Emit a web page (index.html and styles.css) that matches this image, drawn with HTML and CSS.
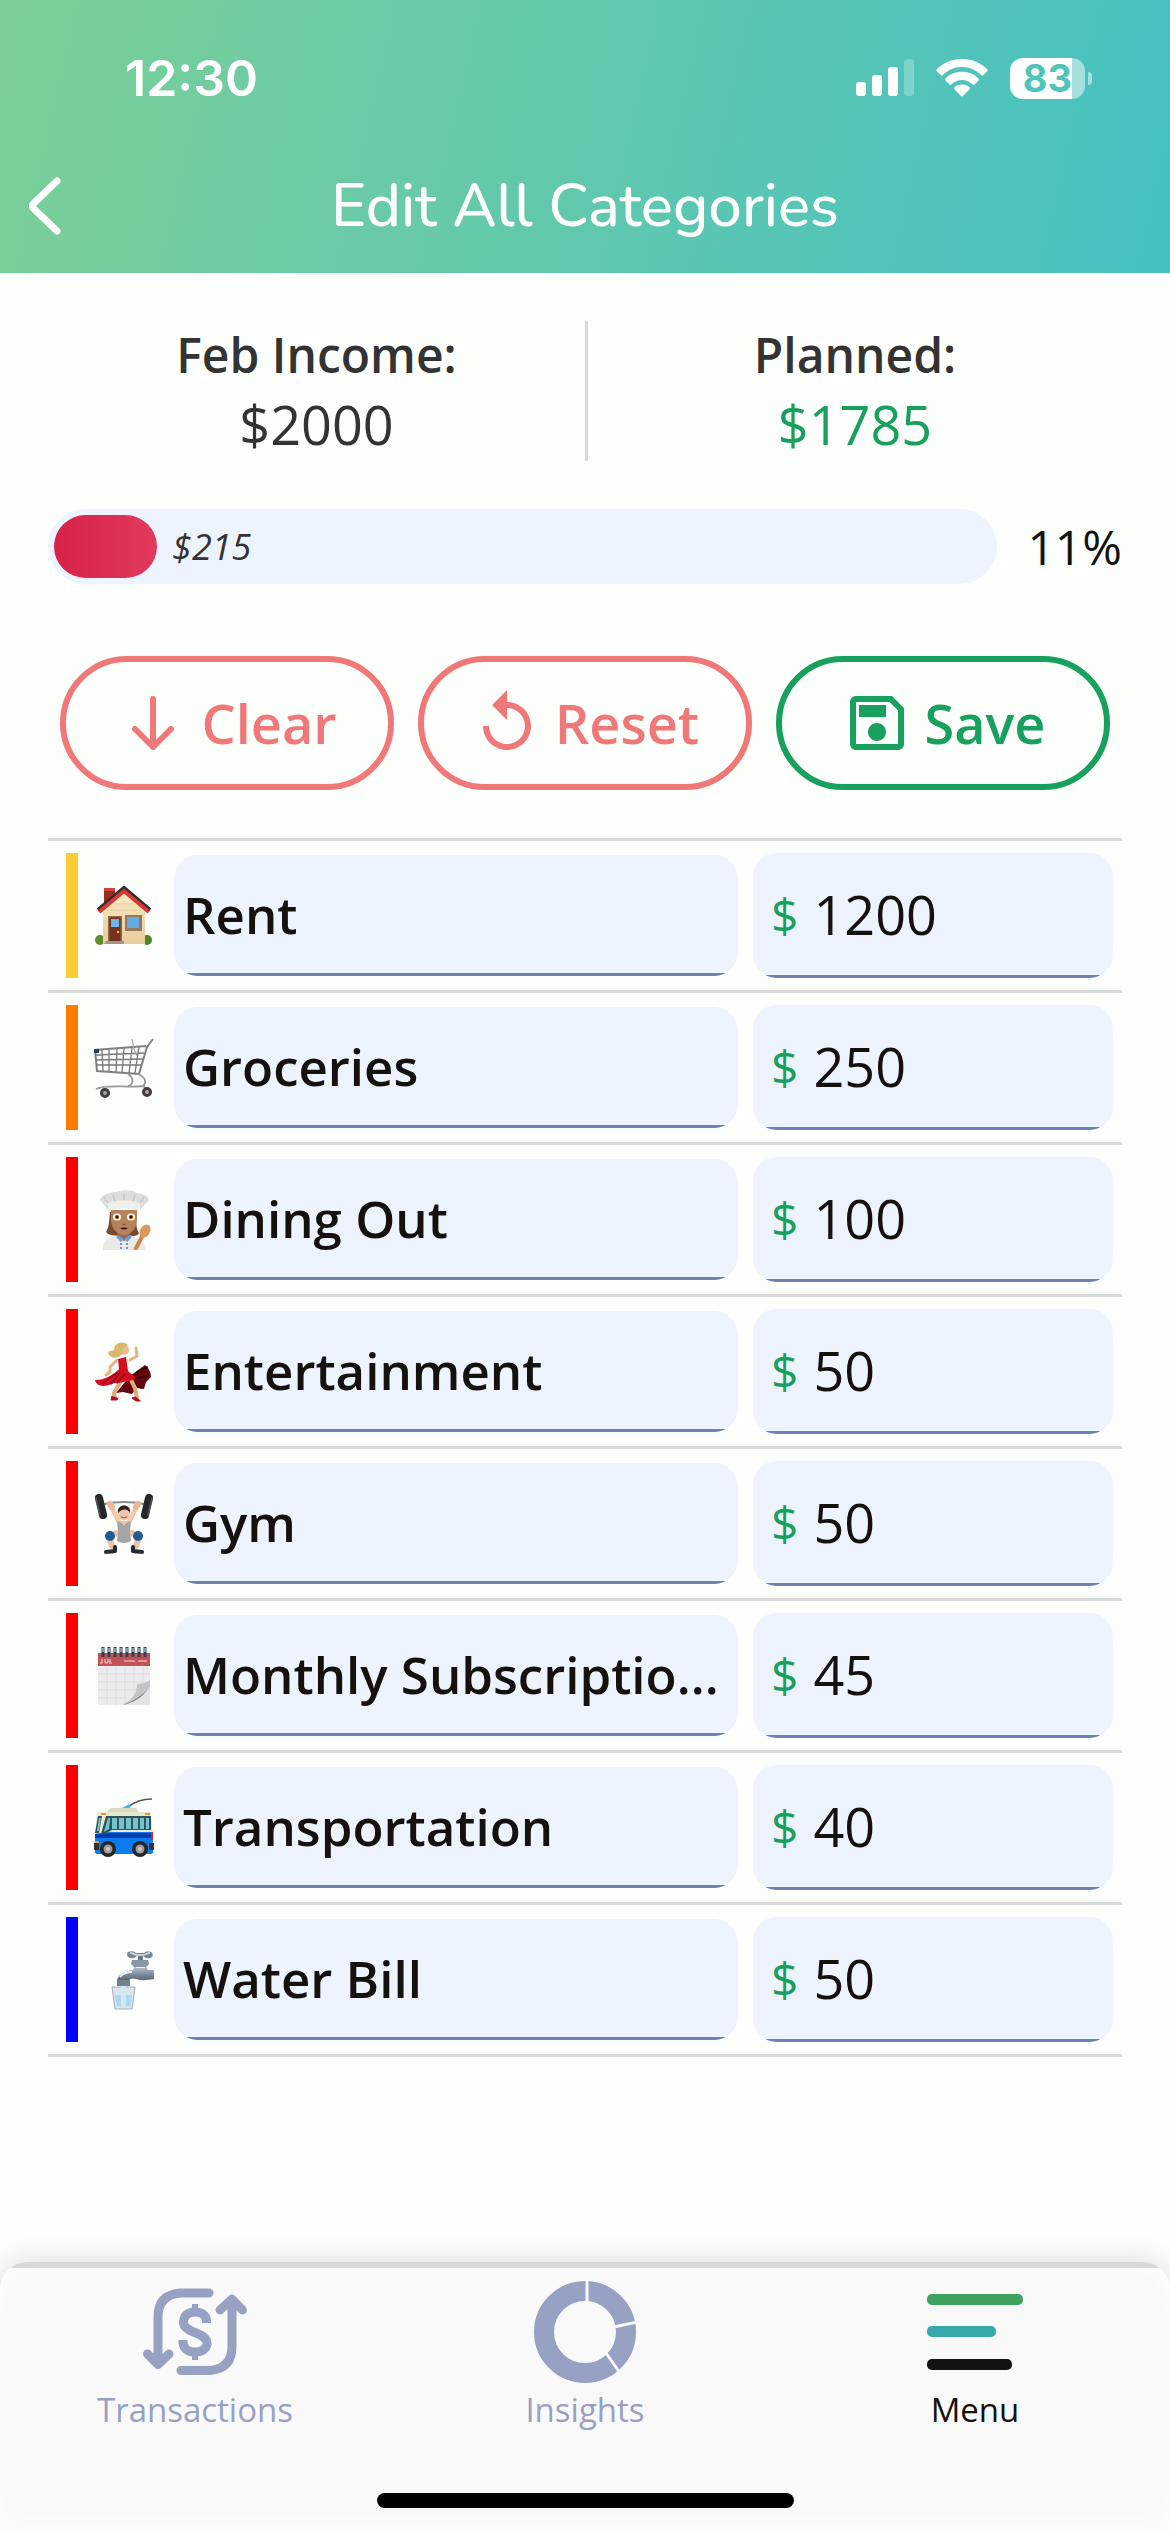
FILE: index.html
```html
<!DOCTYPE html>
<html lang="en">
<head>
<meta charset="utf-8">
<meta name="viewport" content="width=device-width, initial-scale=1">
<title>Edit All Categories</title>
<link rel="stylesheet" href="styles.css">
</head>
<body>
<header class="header">
  <div class="status">
    <span class="time">12:30</span>
    <div class="status-icons">
      <svg width="58" height="38" viewBox="0 0 58 38" fill="#fff" aria-hidden="true">
        <rect x="0" y="23" width="10" height="14" rx="3"/>
        <rect x="16" y="16" width="10" height="21" rx="3"/>
        <rect x="32" y="8" width="10" height="29" rx="3"/>
        <rect x="48" y="0" width="10" height="37" rx="3" opacity=".25"/>
      </svg>
      <svg width="52" height="38" viewBox="0 0 52 38" fill="#fff" aria-hidden="true">
        <path d="M26 0C16 0 7 4 .8 10.200q-.9 1 0 2l4 4q.9.900 1.900 0C12 11 18 8 26 8S40 11 45.300 16.200q1 .900 1.900 0l4-4q.900-1 0-2C45 4 36 0 26 0z"/>
        <path d="M26 12.800c-6.500 0-12.500 2.500-16.500 6.600q-1 1 0 2l4 4q.9.800 1.900 0c3-2.900 6.600-4.500 10.600-4.500s7.600 1.600 10.600 4.500q1 .8 1.900 0l4-4q1-1 0-2c-4-4.100-10-6.600-16.500-6.600z"/>
        <path d="M26 25.500c-2.900 0-5.600 1-7.600 2.800q-1 1 0 2l6.600 6.700q1 .8 2 0l6.600-6.700q1-1 0-2c-2-1.800-4.700-2.800-7.600-2.800z"/>
      </svg>
      <div class="battery"><span class="battery-level">83</span><span class="battery-tip"></span></div>
    </div>
  </div>
  <div class="titlebar">
    <button class="back" type="button" aria-label="Back">
      <svg width="36" height="60" viewBox="0 0 36 60" fill="none" stroke="#fff" stroke-width="7" stroke-linecap="round" stroke-linejoin="round"><path d="M30 5L6.500 27.500Q4.500 30 6.500 32.500L30 55"/></svg>
    </button>
    <h1 class="title">Edit All Categories</h1>
  </div>
</header>

<main class="main">
  <section class="summary">
    <div class="figure"><span class="figure-label">Feb Income:</span><span class="figure-value">$2000</span></div>
    <div class="figure"><span class="figure-label">Planned:</span><span class="figure-value planned">$1785</span></div>
  </section>

  <section class="budget">
    <div class="track">
      <div class="fill" style="width:11%"></div>
      <span class="left">$215</span>
    </div>
    <span class="percent">11%</span>
  </section>

  <div class="actions">
    <button class="action" type="button">
      <svg class="action-icon" viewBox="0 0 24 24" fill="none" stroke="currentColor" stroke-width="2" stroke-linecap="round" stroke-linejoin="round"><path d="M12 4v16M6 14l6 6 6-6"/></svg>
      Clear
    </button>
    <button class="action" type="button">
      <svg class="action-icon" viewBox="0 0 24 24" fill="currentColor"><path d="M12 5V1L7 6l5 5V7c3.310 0 6 2.690 6 6s-2.690 6-6 6-6-2.690-6-6H4c0 4.420 3.580 8 8 8s8-3.580 8-8-3.580-8-8-8z"/></svg>
      Reset
    </button>
    <button class="action save" type="button">
      <svg class="action-icon" viewBox="0 0 24 24" fill="currentColor"><path d="M17 3H5C3.890 3 3 3.900 3 5V19C3 20.100 3.890 21 5 21H19C20.100 21 21 20.100 21 19V7L17 3M19 19H5V5H16.170L19 7.830V19M12 12C10.340 12 9 13.340 9 15S10.340 18 12 18 15 16.660 15 15 13.660 12 12 12M6 6H15V10H6V6Z"/></svg>
      Save
    </button>
  </div>

  <ul class="list">
    <li class="row">
      <span class="stripe yellow"></span>
      <svg class="emoji" viewBox="0 0 60 60" aria-hidden="true">
        <defs><linearGradient id="wall" x2="0" y2="1"><stop stop-color="#fbe9c4"/><stop offset="1" stop-color="#e9cd9c"/></linearGradient></defs>
        <circle cx="6" cy="54" r="5" fill="#5b8f2c"/><circle cx="53" cy="54" r="5" fill="#4f8426"/>
        <path d="M10 2h11v14L10 24z" fill="#9c2b25"/><path d="M10 2h11v3H10z" fill="#c9473c"/>
        <path d="M9 24L30 6l21 18v34H9z" fill="url(#wall)"/>
        <path d="M9 36h42M9 42h42M9 48h42M14 24h32M20 18h20" stroke="#e5cfa5" stroke-width="1"/>
        <path d="M4 24L30 2l26 22" fill="none" stroke="#2d2b2c" stroke-width="4"/>
        <path d="M5 26L30 5l25 21" fill="none" stroke="#d93830" stroke-width="4"/>
        <path d="M14 30h14v26H14z" fill="#8d6547"/><path d="M15.500 31.500h11V56h-11z" fill="#75301e"/>
        <path d="M17 33h8v8h-8z" fill="#6fb7ea"/><circle cx="24" cy="46" r="1.200" fill="#f3c648"/>
        <path d="M31 29h17v16H31z" fill="#98765a"/><path d="M33 31h12v11H33z" fill="#65aae0"/>
        <path d="M12 55h18v3H10z" fill="#9d9589"/>
      </svg>
      <input class="name" type="text" aria-label="Category name" value="Rent">
      <label class="amount"><span class="currency">$</span><input class="amount-input" type="text" inputmode="decimal" aria-label="Amount" value="1200"></label>
    </li>
    <li class="row">
      <span class="stripe orange"></span>
      <svg class="emoji" viewBox="0 0 60 60" fill="none" stroke="#777" aria-hidden="true">
        <path d="M59 1l-6 8-8 27L3 33 1 12l51-4" stroke="#808080" stroke-width="2"/>
        <path d="M2 17l48-2M2 22l47-1M3 27l44 0M8 12l1 21M15 12v22M23 11l-1 23M30 10l-2 25M38 10l-3 25M45 9l-4 26" stroke-width="1.300"/>
        <path d="M38 1l2 10 3 7" stroke="#a5a5a5" stroke-width="1.200"/>
        <path d="M34 36c6 4 6 10 0 12M44 36c9 4 8 9 5 13M2 51c10-5 28-1 48-3l2 6M8 51l4 4" stroke="#999" stroke-width="1.800"/>
        <path d="M0 11h5v4H0z" fill="#214158" stroke="none"/>
        <circle cx="11" cy="55" r="3.500" fill="#aaa" stroke="#423c3d" stroke-width="3"/><circle cx="53" cy="54" r="3.500" fill="#aaa" stroke="#423c3d" stroke-width="3"/>
      </svg>
      <input class="name" type="text" aria-label="Category name" value="Groceries">
      <label class="amount"><span class="currency">$</span><input class="amount-input" type="text" inputmode="decimal" aria-label="Amount" value="250"></label>
    </li>
    <li class="row">
      <span class="stripe red"></span>
      <svg class="emoji" viewBox="0 0 60 60" aria-hidden="true">
        <path d="M16 22c-1 10-1 16-4 20 3 4 10 4 13 3h10c4 2 9 1 10-2-3-4-3-12-3-21z" fill="#7a4a30"/>
        <path d="M23 40h13v9l-6 4-7-4z" fill="#95694a"/>
        <path d="M9 60c0-9 4-12 13-14l8 5 8-5c9 2 13 6 13 14z" fill="#e9e9e7"/>
        <path d="M24 45l6 4-3 3-5-5zM36 45l-6 4 3 3 5-5z" fill="#6e9cd3"/>
        <path d="M26 54h2M32 54h2M26 58h2M32 58h2" stroke="#4b7bc0" stroke-width="1.500"/>
        <path d="M17 20h26v10c0 8-6 15-13 15s-13-7-13-15z" fill="#b5845f"/>
        <ellipse cx="23" cy="27" rx="4" ry="3.500" fill="#fff"/><ellipse cx="37" cy="27" rx="4" ry="3.500" fill="#fff"/>
        <circle cx="23" cy="27" r="2.300" fill="#a3701a"/><circle cx="37" cy="27" r="2.300" fill="#a3701a"/><circle cx="23" cy="27" r="1.200" fill="#1b1008"/><circle cx="37" cy="27" r="1.200" fill="#1b1008"/>
        <path d="M26 38q4-1 8 0-4 3-8 0z" fill="#35160f"/><path d="M28 34q2 1 4 0" stroke="#82563a" fill="none"/>
        <path d="M14 20L6 10C8 4 16 2 22 2c8-3 17-2 21 1 6 0 11 3 12 7l-9 10q-16-4-32 0z" fill="#dededc"/>
        <path d="M14 13q16-5 32 0v7q-16-4-32 0z" fill="#efefed"/><path d="M14 13L10 7M21 11l-2-6M30 10V4M39 11l2-6M46 13l4-6" stroke="#c4c4c4" stroke-width="1.300"/>
        <path d="M41 60l8-15" stroke="#c98749" stroke-width="4"/><ellipse cx="51" cy="41" rx="5" ry="7" fill="#d99a5d" transform="rotate(30 51 41)"/>
      </svg>
      <input class="name" type="text" aria-label="Category name" value="Dining Out">
      <label class="amount"><span class="currency">$</span><input class="amount-input" type="text" inputmode="decimal" aria-label="Amount" value="100"></label>
    </li>
    <li class="row">
      <span class="stripe red"></span>
      <svg class="emoji" viewBox="0 0 60 60" fill="none" stroke-linecap="round" stroke-linejoin="round" aria-hidden="true">
        <path d="M36 34l15-11c3 2 6 7 6 12l-5 5-2 7-7-1-5 6-9-2-7 1z" fill="#68060d"/>
        <path d="M43 30l10-5M42 36l12-2M38 40l9 6" stroke="#2b0306" stroke-width="1.500"/>
        <path d="M28 37l-8 14 1 5M36 36l5 10 2 10" stroke="#dfaa7f" stroke-width="4"/>
        <path d="M23 18l-7 7 0 5-4 3M36 18l7-4-1-8" stroke="#e5b288" stroke-width="3"/>
        <path d="M24 17l8-2 2 14 8 7c-6 4-11 3-17 5-6-1-9 3-16 3-5 0-8-4-8-6 10 0 18-5 24-11z" fill="#d50f22"/>
        <path d="M26 31l-9 11M31 32l-8 9M23 31L9 41" stroke="#8c0716" stroke-width="1.500"/>
        <circle cx="30" cy="8" r="5" fill="#e9bd91"/>
        <path d="M34 3c-6-5-14-2-14 5-1 1-5 0-6 3 2 5 8 6 12 3 4-2 2-6 4-8z" fill="#d8b86c"/>
        <path d="M18 54l-1 4 6 0 1-2M41 55l-3 1 4 3h4z" fill="#b40c1d" stroke="#b40c1d"/>
      </svg>
      <input class="name" type="text" aria-label="Category name" value="Entertainment">
      <label class="amount"><span class="currency">$</span><input class="amount-input" type="text" inputmode="decimal" aria-label="Amount" value="50"></label>
    </li>
    <li class="row">
      <span class="stripe red"></span>
      <svg class="emoji" viewBox="0 0 60 60" fill="none" stroke-linecap="round" stroke-linejoin="round" aria-hidden="true">
        <path d="M10 10q20-4 40 0" stroke="#8c8c8c" stroke-width="2"/>
        <path d="M22 39l-7 4 3 9M38 39l7 4-3 9" stroke="#edc3a5" stroke-width="6"/>
        <path d="M17 12l8 16M43 12l-8 16" stroke="#f0c9ac" stroke-width="5"/>
        <path d="M16 10l2 3M44 10l-2 3" stroke="#eab798" stroke-width="6"/>
        <path d="M23 27q7 4 14 0l-1 11 1 9q-7 4-14 0l1-9z" fill="#a3a5a7"/>
        <path d="M26 27l4 5 4-5" fill="#eec3a4"/>
        <ellipse cx="30" cy="19" rx="6" ry="7.500" fill="#efc6a9"/><path d="M24 19c-2-10 14-10 12 0-2-4-7-5-12 0z" fill="#2b2424"/>
        <path d="M27 23q3 2 6 0" stroke="#935a46"/>
        <circle cx="16" cy="42" r="5" fill="#245a94"/><circle cx="44" cy="42" r="5" fill="#245a94"/>
        <path d="M21 53v4l-9 1M39 53v4l9 1" stroke="#262a33" stroke-width="4"/><path d="M11 60h8M41 60h8" stroke="#3279c2" stroke-width="1"/>
        <path d="M5 4l4 17M55 4l-4 17" stroke="#252729" stroke-width="8"/><path d="M2 4l4 17M58 4l-4 17" stroke="#555" stroke-width="1.500"/>
      </svg>
      <input class="name" type="text" aria-label="Category name" value="Gym">
      <label class="amount"><span class="currency">$</span><input class="amount-input" type="text" inputmode="decimal" aria-label="Amount" value="50"></label>
    </li>
    <li class="row">
      <span class="stripe red"></span>
      <svg class="emoji" viewBox="0 0 60 60" aria-hidden="true">
        <path d="M4 18h52v23L36 59H4z" fill="#ececef"/><path d="M4 7h52v13H4z" fill="#c55058"/>
        <path d="M4 28h52M4 36h52M4 44h52M4 52h40M13 20v39M22 20v39M31 20v39M40 20v36M49 20v28" stroke="#dcdce0"/>
        <path d="M56 38c-3 2-6 3-9 3-2 7-7 13-17 18h26z" fill="#e4e4e4"/><path d="M56 37c-4 1-7 3-11 4-1 7-6 13-16 18 14-3 25-12 27-22z" fill="#77777a"/>
        <path d="M56 34c-4 3-9 4-13 4 1 6-4 16-14 21 12-4 24-13 27-19z" fill="#c4c4c7"/>
        <path d="M8 13v4h-2M11 13v3q1.500 2 3 0v-3M16 13v4h2M30 15h11M44 15h9" fill="none" stroke="#e8abb0" stroke-width="1.500"/>
        <path d="M9 1v10M15 1v10M21 1v10M27 1v10M33 1v10M39 1v10M45 1v10M51 1v10" stroke="#32414c" stroke-width="3"/><path d="M9 2v4M15 2v4M21 2v4M27 2v4M33 2v4M39 2v4M45 2v4M51 2v4" stroke="#9db8ce" stroke-width="1.500"/>
      </svg>
      <input class="name" type="text" aria-label="Category name" value="Monthly Subscriptio...">
      <label class="amount"><span class="currency">$</span><input class="amount-input" type="text" inputmode="decimal" aria-label="Amount" value="45"></label>
    </li>
    <li class="row">
      <span class="stripe red"></span>
      <svg class="emoji" viewBox="0 0 60 60" aria-hidden="true">
        <path d="M34 9C40 4 48 1 58 1" fill="none" stroke="#555" stroke-width="1.500"/><path d="M28 10l7-4 2 3-5 3z" fill="#46b9e8"/>
        <path d="M13 14l3-4h26l3 4z" fill="#dad9c4"/>
        <path d="M3 14h54l2 23H1z" fill="#e8e7cf"/><path d="M1 36L15 34h44v20q0 2-2 2H3q-2 0-2-2z" fill="#087cf0"/><path d="M1 36l14-1h44v5H1z" fill="#073daf"/>
        <path d="M4 18h4L5 35H1zM12 18h45v14H18l-7 4H7z" fill="#31535b"/>
        <path d="M5 20h2L5 33H3zM14 20l-4 14 5-3 1-11zM18 20h5v11h-5zM25 20h5v11h-5zM32 20h5v11h-5zM39 20h5v11h-5zM46 20h4v11h-4zM52 20h3v11h-3z" fill="#73c4cc"/>
        <path d="M7 15h5v2H7zM51 15h5v2h-5zM1 43h4v3H1z" fill="#f79320"/><path d="M0 45h5v7H0zM55 45h5v7h-5z" fill="#333"/><path d="M57 34h2v8h-2z" fill="#e11d2f"/>
        <circle cx="14" cy="51" r="8" fill="#252525"/><circle cx="46" cy="51" r="8" fill="#252525"/><circle cx="14" cy="51" r="4.500" fill="#999"/><circle cx="46" cy="51" r="4.500" fill="#999"/><circle cx="14" cy="51" r="2" fill="#ccc"/><circle cx="46" cy="51" r="2" fill="#ccc"/>
      </svg>
      <input class="name" type="text" aria-label="Category name" value="Transportation">
      <label class="amount"><span class="currency">$</span><input class="amount-input" type="text" inputmode="decimal" aria-label="Amount" value="40"></label>
    </li>
    <li class="row">
      <span class="stripe blue"></span>
      <svg class="emoji" viewBox="0 0 60 60" aria-hidden="true">
        <defs><linearGradient id="metal" x2="0" y2="1"><stop stop-color="#cbd4dd"/><stop offset=".5" stop-color="#8896a6"/><stop offset="1" stop-color="#495767"/></linearGradient></defs>
        <path d="M44 5h5v8h-5z" fill="#6d7885"/>
        <path d="M60 20h-6l-3-6h-9l-3 6c-10 2-16 5-16 12h12c0-4 3-4 7-3 7 2 11 1 18 0z" fill="url(#metal)"/>
        <path d="M26 27q4-5 12-5M42 17h9" stroke="#edf2f7" stroke-width="2" fill="none"/>
        <path d="M38 10h16l1 4-3 3H40l-3-3z" fill="#8997a6"/><path d="M34 2q6-2 8 1h8q3-3 7-1 3 2 1 5-5 3-9-1h-6q-4 4-9 1-2-3 0-5z" fill="#75869a"/><path d="M36 3q4 0 6 2h8q3-2 6-2" fill="none" stroke="#d7e3ef" stroke-width="1.500"/>
        <path d="M23 30h13v6H23z" fill="#748290"/>
        <path d="M18 37h23l-3 22H21z" fill="#dce4ea" stroke="#a3adb6"/><path d="M21 45h17l-2 11H23z" fill="#a8daf6"/><path d="M27 36h5v20h-5z" fill="#cfeafa"/>
      </svg>
      <input class="name" type="text" aria-label="Category name" value="Water Bill">
      <label class="amount"><span class="currency">$</span><input class="amount-input" type="text" inputmode="decimal" aria-label="Amount" value="50"></label>
    </li>
  </ul>
</main>

<nav class="tabs">
  <div class="tab-row">
    <a class="tab" href="#transactions">
      <svg width="104" height="102" viewBox="0 0 104 102" fill="none" stroke="#97a1c4" stroke-width="9" stroke-linecap="round" stroke-linejoin="round" aria-hidden="true">
        <path d="M66 12H37Q15 14 15 36v46M4.500 73L15 83.500 26 73M38 89.500h29q22-2 22-24V19M77 29L89 18l10.500 11"/>
        <path d="M63.500 42v-2c0-5-4-9-11.500-9S40.500 35 40.500 41.500c0 11 23.500 9 23.500 21 0 5-5 8.500-12 8.500s-12-3.500-12-10v-2" stroke-linecap="butt"/>
        <path d="M52 23v8M52 71v8" stroke-width="6" stroke-linecap="butt"/>
      </svg>
      <span class="tab-label">Transactions</span>
    </a>
    <a class="tab" href="#insights">
      <svg width="102" height="102" viewBox="0 0 102 102" fill="none" aria-hidden="true">
        <circle cx="51" cy="51" r="41" stroke="#97a1c4" stroke-width="20"/>
        <path d="M53 0v23M103 41l-23 5M72 72l14 20" stroke="#f9f9f9" stroke-width="3"/>
      </svg>
      <span class="tab-label">Insights</span>
    </a>
    <a class="tab active" href="#menu">
      <svg width="96" height="102" viewBox="0 0 96 102" aria-hidden="true">
        <rect y="13" width="96" height="11" rx="5" fill="#3fa35f"/><rect y="45" width="69" height="11" rx="5" fill="#38a9aa"/><rect y="78" width="85" height="11" rx="5" fill="#15110d"/>
      </svg>
      <span class="tab-label">Menu</span>
    </a>
  </div>
  <div class="home-indicator"></div>
</nav>
</body>
</html>
```

FILE: styles.css
```css
* { box-sizing: border-box; }

body {
  margin: 0;
  min-height: 100vh;
  display: flex;
  flex-direction: column;
  background: #fdfffc;
  color: #15110d;
  font-family: "Open Sans", "Noto Sans", sans-serif;
}

button, input { font: inherit; color: inherit; }

.header {
  background: linear-gradient(103deg, #7ccf97, #45c1c3);
  color: #fff;
}

.status {
  display: flex;
  align-items: center;
  justify-content: space-between;
  height: 135px;
  padding: 21px 78px 0 125px;
}

.time {
  font: 600 50px/60px Inter, sans-serif;
}

.status-icons {
  display: flex;
  align-items: center;
  gap: 22px;
}

.battery {
  display: flex;
  align-items: center;
  gap: 3px;
}

.battery-level {
  width: 75px;
  border-radius: 13px;
  background: linear-gradient(90deg, #fff 62px, rgba(255, 255, 255, 0.5) 62px);
  color: #4fc4b8;
  font: 700 38px/41px Inter, sans-serif;
  text-align: center;
}

.battery-tip {
  width: 4px;
  height: 13px;
  border-radius: 0 4px 4px 0;
  background: rgba(255, 255, 255, 0.5);
}

.titlebar {
  display: grid;
  grid-template-columns: 90px 1fr 90px;
  align-items: center;
  height: 138px;
  padding-top: 4px;
}

.back {
  display: flex;
  padding: 0 0 0 27px;
  border: 0;
  background: none;
}

.title {
  margin: 0;
  font: 500 60px/80px Nunito, "Open Sans", sans-serif;
  text-align: center;
}

.main {
  flex: 1;
  padding: 48px 48px 96px;
}

.summary {
  display: grid;
  grid-template-columns: 1fr 1fr;
  color: #333;
}

.figure {
  display: flex;
  flex-direction: column;
  align-items: center;
}

.figure + .figure { border-left: 3px solid #d9d9d9; }

.figure-label {
  font-size: 48px;
  font-weight: 600;
  line-height: 67px;
}

.figure-value {
  font-size: 54px;
  line-height: 73px;
}

.planned { color: #18a05e; }

.budget {
  display: flex;
  align-items: center;
  gap: 30px;
  margin-top: 48px;
}

.track {
  flex: 1;
  display: flex;
  align-items: center;
  gap: 15px;
  height: 75px;
  padding: 6px;
  border-radius: 38px;
  background: #eef4ff;
}

.fill {
  height: 63px;
  border-radius: 32px;
  background: linear-gradient(90deg, #d82148, #e03a5d);
}

.left {
  color: #333;
  font-size: 36px;
  font-style: italic;
}

.percent { font-size: 48px; }

.actions {
  display: grid;
  grid-template-columns: repeat(3, 1fr);
  gap: 24px;
  margin: 72px 12px 48px;
}

.action {
  display: flex;
  align-items: center;
  justify-content: center;
  gap: 12px;
  height: 134px;
  padding: 0;
  border: 6px solid #f07878;
  border-radius: 67px;
  background: none;
  color: #f07878;
  font-size: 54px;
  font-weight: 600;
}

.save {
  border-color: #18a05e;
  color: #18a05e;
}

.action-icon {
  width: 72px;
  height: 72px;
}

.list {
  margin: 0;
  padding: 0;
  list-style: none;
  border-bottom: 3px solid #d9d9d9;
}

.row {
  display: flex;
  align-items: center;
  padding: 12px 9px 12px 18px;
  border-top: 3px solid #d9d9d9;
}

.stripe {
  width: 12px;
  height: 125px;
}

.yellow { background: #ffcc33; }
.orange { background: #ff7b00; }
.red { background: #ff0000; }
.blue { background: #0000ff; }

.emoji {
  flex: none;
  width: 60px;
  height: 60px;
  margin: 0 20px 0 16px;
}

/* The underline is part of the background, so the rounded corners clip it. */
.name,
.amount {
  border: 0;
  border-radius: 24px;
  background: linear-gradient(#6f7fb0, #6f7fb0) bottom / 100% 3px no-repeat #eef4ff;
}

.name {
  flex: 1;
  min-width: 0;
  height: 121px;
  padding: 0 9px 3px;
  font-size: 51px;
  font-weight: 600;
  text-overflow: ellipsis;
}

.amount {
  flex: none;
  display: flex;
  align-items: center;
  gap: 15px;
  width: 360px;
  height: 125px;
  margin-left: 15px;
  padding: 0 18px 3px;
}

.currency {
  color: #18a05e;
  font-size: 48px;
}

.amount-input {
  flex: 1;
  min-width: 0;
  padding: 0;
  border: 0;
  background: none;
  font-size: 54px;
}

.tabs {
  overflow: hidden;
  border-radius: 27px 27px 0 0;
  background: #f9f9f9;
  box-shadow: 0 0 30px rgba(0, 0, 0, 0.15), inset 0 0 30px #fff;
}

.tab-row {
  display: grid;
  grid-template-columns: repeat(3, 1fr);
  padding-top: 13px;
  border-top: 6px solid #d9d9d9;
}

.tab {
  display: flex;
  flex-direction: column;
  align-items: center;
  gap: 4px;
  color: #97a1c4;
  text-decoration: none;
}

.tab-label {
  font-size: 33px;
  line-height: 45px;
}

.active { color: #15110d; }

.home-indicator {
  width: 417px;
  height: 15px;
  margin: 61px auto 24px;
  border-radius: 8px;
  background: #000;
}
```
